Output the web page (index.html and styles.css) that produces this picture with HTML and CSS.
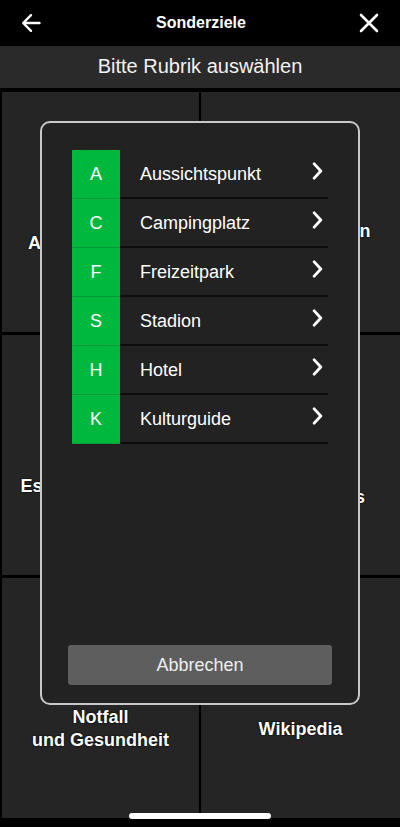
FILE: index.html
```html
<!DOCTYPE html>
<html lang="de">
<head>
<meta charset="utf-8">
<title>Sonderziele</title>
<link rel="stylesheet" href="styles.css">
</head>
<body>
<div class="screen">
  <header class="topbar">
    <svg class="icon back" viewBox="0 0 20 20" width="20" height="20"><path d="M18.5 10H2.5M10 2.2L2.2 10L10 17.8" fill="none" stroke="#fff" stroke-width="2.4" stroke-linecap="round" stroke-linejoin="round"/></svg>
    <h1 class="title">Sonderziele</h1>
    <svg class="icon close" viewBox="0 0 20 20" width="20" height="20"><path d="M2 2L18 18M18 2L2 18" fill="none" stroke="#fff" stroke-width="2.6" stroke-linecap="round"/></svg>
  </header>
  <div class="subheader">Bitte Rubrik auswählen</div>
  <main class="grid">
    <div class="cell"><span>Aussichtspunkte</span></div>
    <div class="cell"><span>Veranstaltungen<br>und Kultur</span></div>
    <div class="cell"><span>Essen und Trinken</span></div>
    <div class="cell"><span>Freizeit<br>Sport &amp; Events</span></div>
    <div class="cell"><span>Notfall<br>und Gesundheit</span></div>
    <div class="cell"><span>Wikipedia</span></div>
  </main>
  <div class="home-indicator"></div>

  <div class="modal">
    <ul class="list">
      <li class="row"><span class="badge">A</span><span class="label">Aussichtspunkt</span><svg class="chev" viewBox="0 0 10 16" width="10" height="16"><path d="M2 1.5L8 8L2 14.5" fill="none" stroke="#fff" stroke-width="2.6" stroke-linecap="round" stroke-linejoin="round"/></svg></li>
      <li class="row"><span class="badge">C</span><span class="label">Campingplatz</span><svg class="chev" viewBox="0 0 10 16" width="10" height="16"><path d="M2 1.5L8 8L2 14.5" fill="none" stroke="#fff" stroke-width="2.6" stroke-linecap="round" stroke-linejoin="round"/></svg></li>
      <li class="row"><span class="badge">F</span><span class="label">Freizeitpark</span><svg class="chev" viewBox="0 0 10 16" width="10" height="16"><path d="M2 1.5L8 8L2 14.5" fill="none" stroke="#fff" stroke-width="2.6" stroke-linecap="round" stroke-linejoin="round"/></svg></li>
      <li class="row"><span class="badge">S</span><span class="label">Stadion</span><svg class="chev" viewBox="0 0 10 16" width="10" height="16"><path d="M2 1.5L8 8L2 14.5" fill="none" stroke="#fff" stroke-width="2.6" stroke-linecap="round" stroke-linejoin="round"/></svg></li>
      <li class="row"><span class="badge">H</span><span class="label">Hotel</span><svg class="chev" viewBox="0 0 10 16" width="10" height="16"><path d="M2 1.5L8 8L2 14.5" fill="none" stroke="#fff" stroke-width="2.6" stroke-linecap="round" stroke-linejoin="round"/></svg></li>
      <li class="row"><span class="badge">K</span><span class="label">Kulturguide</span><svg class="chev" viewBox="0 0 10 16" width="10" height="16"><path d="M2 1.5L8 8L2 14.5" fill="none" stroke="#fff" stroke-width="2.6" stroke-linecap="round" stroke-linejoin="round"/></svg></li>
    </ul>
    <button class="cancel" type="button">Abbrechen</button>
  </div>
</div>
</body>
</html>
```

FILE: styles.css
```css
* { box-sizing: border-box; }
html, body {
  margin: 0;
  padding: 0;
  background: #000;
}
body {
  font-family: "Liberation Sans", Arial, sans-serif;
  color: #fff;
}
.screen {
  position: relative;
  width: 400px;
  height: 827px;
  overflow: hidden;
  background: #000;
}
.topbar {
  height: 46px;
  display: flex;
  align-items: center;
  justify-content: space-between;
  padding: 0 21px 0 21px;
}
.title {
  margin: 0;
  font-size: 16px;
  font-weight: bold;
  color: #fff;
  padding-left: 2px;
}
.icon { display: block; }
.subheader {
  height: 42px;
  background: #2a2a2a;
  color: #f2f2f2;
  font-size: 20px;
  display: flex;
  align-items: center;
  justify-content: center;
  padding-bottom: 1px;
}
.grid {
  margin-top: 4px;
  padding: 0 2px;
  display: grid;
  grid-template-columns: 197px 199px;
  grid-template-rows: 240px 240px 240px;
  column-gap: 2px;
  row-gap: 3px;
}
.cell {
  background: #252525;
  display: flex;
  align-items: center;
  justify-content: center;
  padding-top: 62px;
  text-align: center;
  font-size: 18px;
  font-weight: bold;
  line-height: 23px;
  color: #fff;
  text-shadow: 0 0 2px #000, 0 0 1px #000;
}
.home-indicator {
  position: absolute;
  left: 129px;
  top: 813px;
  width: 142px;
  height: 6px;
  border-radius: 3px;
  background: #fff;
}
.modal {
  position: absolute;
  left: 40px;
  top: 121px;
  width: 320px;
  height: 584px;
  background: #222;
  border: 2px solid #c8c8c8;
  border-radius: 10px;
  padding: 27px 26px 18px 26px;
  display: flex;
  flex-direction: column;
  justify-content: space-between;
}
.list {
  list-style: none;
  margin: 0;
  padding: 0 4px;
}
.row {
  position: relative;
  display: flex;
  align-items: stretch;
  height: 49px;
}
.badge {
  width: 48px;
  flex: none;
  background: #00b83e;
  border-bottom: 1px solid #079a36;
  display: flex;
  align-items: center;
  justify-content: center;
  font-size: 18px;
  color: #fff;
}
.label {
  flex: 1;
  display: flex;
  align-items: center;
  padding-left: 20px;
  font-size: 18px;
  color: #fff;
  border-bottom: 2px solid #0c0c0c;
  padding-top: 2px;
}
.chev {
  position: absolute;
  right: 5px;
  top: 12px;
  width: 11px;
  height: 18px;
}
.cancel {
  display: block;
  width: 100%;
  height: 40px;
  border: none;
  border-radius: 3px;
  background: #5e5e5e;
  color: #eee;
  font-family: "Liberation Sans", Arial, sans-serif;
  font-size: 18px;
  padding: 0;
}
```
